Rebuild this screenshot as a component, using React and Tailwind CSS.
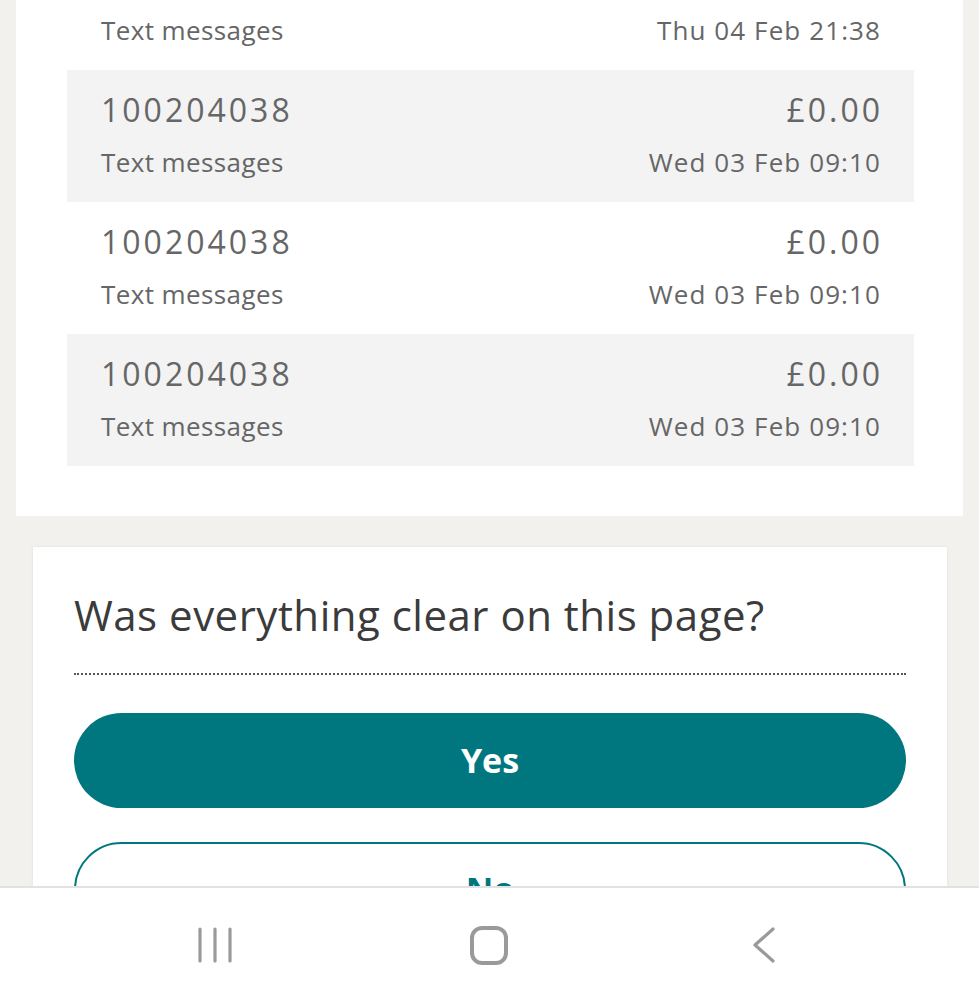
const rows = [
  { id: "100204038", amount: "£0.00", label: "Text messages", date: "Wed 03 Feb 09:10" },
  { id: "100204038", amount: "£0.00", label: "Text messages", date: "Wed 03 Feb 09:10" },
  { id: "100204038", amount: "£0.00", label: "Text messages", date: "Wed 03 Feb 09:10" },
];

function SubLine({ label, date }) {
  return (
    <div className="flex h-[32px] items-center justify-between text-[26px]">
      <span className="tracking-[0.4px]">{label}</span>
      <span className="-mr-[1px] tracking-[1.1px]">{date}</span>
    </div>
  );
}

function Row({ row, shaded }) {
  return (
    <div
      className={`flex h-[132px] flex-col gap-[16px] px-[34px] pt-[20px] ${shaded ? "bg-[#f3f3f3]" : "bg-white"}`}
    >
      <div className="flex h-[40px] items-center justify-between text-[32px]">
        <span className="tracking-[3px]">{row.id}</span>
        <span className="-mr-[3px] tracking-[3px]">{row.amount}</span>
      </div>
      <SubLine label={row.label} date={row.date} />
    </div>
  );
}

export default function App() {
  return (
    <div
      className="flex h-[999px] w-[979px] flex-col overflow-hidden bg-[#f2f1ee] text-[#666]"
      style={{ fontFamily: '"Open Sans", "Noto Sans", sans-serif' }}
    >
      <div className="h-[886px] overflow-hidden">
        {/* usage list, scrolled part-way */}
        <div className="mx-[16px] bg-white pr-[49px] pl-[51px] pb-[50px]">
          <div className="h-[70px] px-[34px] pt-[14px]">
            <SubLine label="Text messages" date="Thu 04 Feb 21:38" />
          </div>
          {rows.map((row, i) => (
            <Row key={i} row={row} shaded={i % 2 === 0} />
          ))}
        </div>

        {/* feedback */}
        <div className="mt-[31px] ml-[33px] w-[914px] bg-white px-[41px] pt-[44px] pb-[40px] shadow-[0_0_3px_rgba(0,0,0,0.08)]">
          <h2 className="h-[48px] text-[42px] leading-[48px] tracking-[0.5px] text-[#3b3b3b]">
            Was everything clear on this page?
          </h2>
          <div className="mt-[34px] border-b-2 border-dotted border-[#555]" />
          <button className="mt-[38px] flex h-[95px] w-full items-center justify-center rounded-full bg-[#00777f] text-[34px] font-bold text-white">
            Yes
          </button>
          <button className="mt-[34px] flex h-[95px] w-full items-center justify-center rounded-full border-2 border-[#00777f] bg-white text-[34px] font-bold text-[#00777f]">
            No
          </button>
        </div>
      </div>

      {/* system nav bar */}
      <div className="flex h-[113px] items-start justify-center border-t-2 border-[#e2e2e2] bg-white pt-[38px] pr-[1px]">
        <div className="flex w-[274px] justify-center">
          <svg width="36" height="38" viewBox="0 0 36 38" fill="none" stroke="#9a9a9a" strokeWidth="3.2" strokeLinecap="round">
            <line x1="3" y1="3" x2="3" y2="35" />
            <line x1="18" y1="3" x2="18" y2="35" />
            <line x1="33" y1="3" x2="33" y2="35" />
          </svg>
        </div>
        <div className="flex w-[274px] justify-center">
          <svg width="40" height="40" viewBox="0 0 40 40" fill="none" stroke="#9a9a9a" strokeWidth="4">
            <rect x="3" y="2" width="34" height="35" rx="10" />
          </svg>
        </div>
        <div className="flex w-[274px] justify-center">
          <svg width="26" height="38" viewBox="0 0 26 38" fill="none" stroke="#9a9a9a" strokeWidth="3.2" strokeLinecap="round" strokeLinejoin="round">
            <polyline points="23,3 5,19 23,35" />
          </svg>
        </div>
      </div>
    </div>
  );
}
